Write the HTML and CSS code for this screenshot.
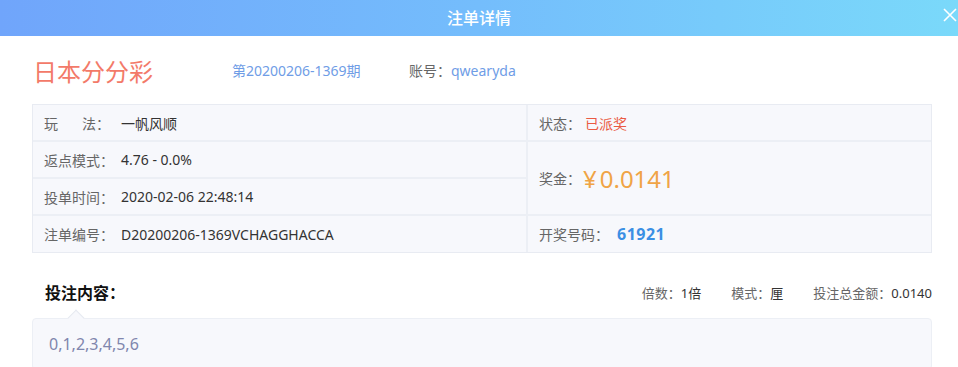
FILE: index.html
```html
<!DOCTYPE html>
<html lang="zh-CN">
<head>
    <meta charset="UTF-8">
    <title>注单详情</title>
    <link rel="stylesheet" href="styles.css">
</head>
<body>
    <div class="dialog">
        <header class="dialog-header">
            <h1 class="dialog-title">注单详情</h1>
            <span class="dialog-close">
                <svg width="14" height="14" viewBox="0 0 14 14"><path d="M1 1 L13 13 M13 1 L1 13" stroke="#fff" stroke-width="1.6" fill="none"/></svg>
            </span>
        </header>

        <main class="dialog-body">
            <div class="order-head">
                <span class="lottery-name">日本分分彩</span>
                <span class="period">第20200206-1369期</span>
                <span class="account"><em>账号：</em>qwearyda</span>
            </div>

            <section class="info-grid">
                <div class="cell cell-a1"><span class="label"><i class="wide">玩</i>法：</span><span class="value">一帆风顺</span></div>
                <div class="cell cell-b1"><span class="label">状态：</span><span class="status">已派奖</span></div>
                <div class="cell cell-a2"><span class="label">返点模式：</span><span class="value">4.76 - 0.0%</span></div>
                <div class="cell cell-b2"><span class="label">奖金：</span><span class="prize"><i>¥</i>0.0141</span></div>
                <div class="cell cell-a3"><span class="label">投单时间：</span><span class="value">2020-02-06 22:48:14</span></div>
                <div class="cell cell-a4"><span class="label">注单编号：</span><span class="value">D20200206-1369VCHAGGHACCA</span></div>
                <div class="cell cell-b4"><span class="label">开奖号码：</span><span class="win-code">61921</span></div>
            </section>

            <div class="bet-bar">
                <span class="bet-title">投注内容：</span>
                <div class="bet-stats">
                    <span><em>倍数：</em>1倍</span>
                    <span><em>模式：</em>厘</span>
                    <span><em>投注总金额：</em>0.0140</span>
                </div>
            </div>

            <div class="bet-content">0,1,2,3,4,5,6</div>
        </main>
    </div>
</body>
</html>
```

FILE: styles.css
```css
body {
    margin: 0;
    font-family: "Noto Sans", "Noto Sans CJK SC", sans-serif;
    background: #fff;
    color: #333;
}

/* 标题栏 */
.dialog-header {
    position: relative;
    height: 36px;
    background: linear-gradient(90deg, #70a5fb 0%, #74bdfc 50%, #7ad9fa 100%);
    text-align: center;
}

.dialog-title {
    margin: 0;
    font-size: 16px;
    font-weight: 500;
    line-height: 36px;
    color: #fff;
}

.dialog-close {
    position: absolute;
    top: 5px;
    right: 1px;
    width: 14px;
    height: 14px;
}

.dialog-body {
    padding: 0 26px 0 32px;
}

/* 彩种 + 期号 */
.order-head {
    display: flex;
    align-items: center;
    height: 68px;
    padding-left: 1px;
}

.lottery-name {
    width: 199px;
    font-size: 24px;
    color: #f37a69;
}

.period {
    width: 177px;
    font-size: 14px;
    color: #6f9de6;
}

.account {
    font-size: 14px;
    color: #6f9de6;
}

.account em,
.bet-stats em {
    font-style: normal;
    color: #666;
}

/* 信息表格 */
.info-grid {
    display: grid;
    grid-template-columns: 493px 1fr;
    grid-template-rows: 35px 35px 35px 36px;
    gap: 2px;
    border: 1px solid #e8ebf2;
    background: #eceff5;
}

.cell {
    display: flex;
    align-items: center;
    padding-left: 11px;
    background: #f7f8fc;
    font-size: 14px;
}

.cell-a1 { grid-column: 1; grid-row: 1; }
.cell-a2 { grid-column: 1; grid-row: 2; }
.cell-a3 { grid-column: 1; grid-row: 3; }
.cell-a4 { grid-column: 1; grid-row: 4; }
.cell-b1 { grid-column: 2; grid-row: 1; }
.cell-b2 { grid-column: 2; grid-row: 2 / span 2; }
.cell-b4 { grid-column: 2; grid-row: 4; }

.cell-a1 .label,
.cell-a2 .label,
.cell-a3 .label,
.cell-a4 .label {
    width: 77px;
}

.label {
    color: #666;
}

.label .wide {
    font-style: normal;
    margin-right: 24px;
}

.value {
    color: #333;
}

.status {
    margin-left: 4px;
    color: #ea5a43;
}

.prize {
    margin-left: 2px;
    font-size: 24px;
    color: #f0a446;
}

.prize i {
    font-style: normal;
    margin-right: 3px;
}

.win-code {
    margin-left: 8px;
    font-size: 16px;
    font-weight: bold;
    color: #3b8fe4;
    letter-spacing: 0.5px;
}

/* 投注内容 */
.bet-bar {
    display: flex;
    align-items: center;
    justify-content: space-between;
    height: 32px;
    margin-top: 23px;
}

.bet-title {
    padding-left: 13px;
    font-size: 16px;
    font-weight: bold;
    color: #111;
}

.bet-stats {
    display: flex;
    gap: 30px;
    font-size: 13px;
    color: #333;
}

.bet-content {
    position: relative;
    margin-top: 10px;
    padding: 14px 16px;
    background: #f7f8fc;
    border: 1px solid #eceff5;
    border-radius: 4px;
    font-size: 16px;
    color: #8086ad;
}

.bet-content::before {
    content: "";
    position: absolute;
    top: -7px;
    left: 37px;
    width: 11px;
    height: 11px;
    background: #f7f8fc;
    border-top: 1px solid #e6e9f0;
    border-left: 1px solid #e6e9f0;
    transform: rotate(45deg);
}
```
